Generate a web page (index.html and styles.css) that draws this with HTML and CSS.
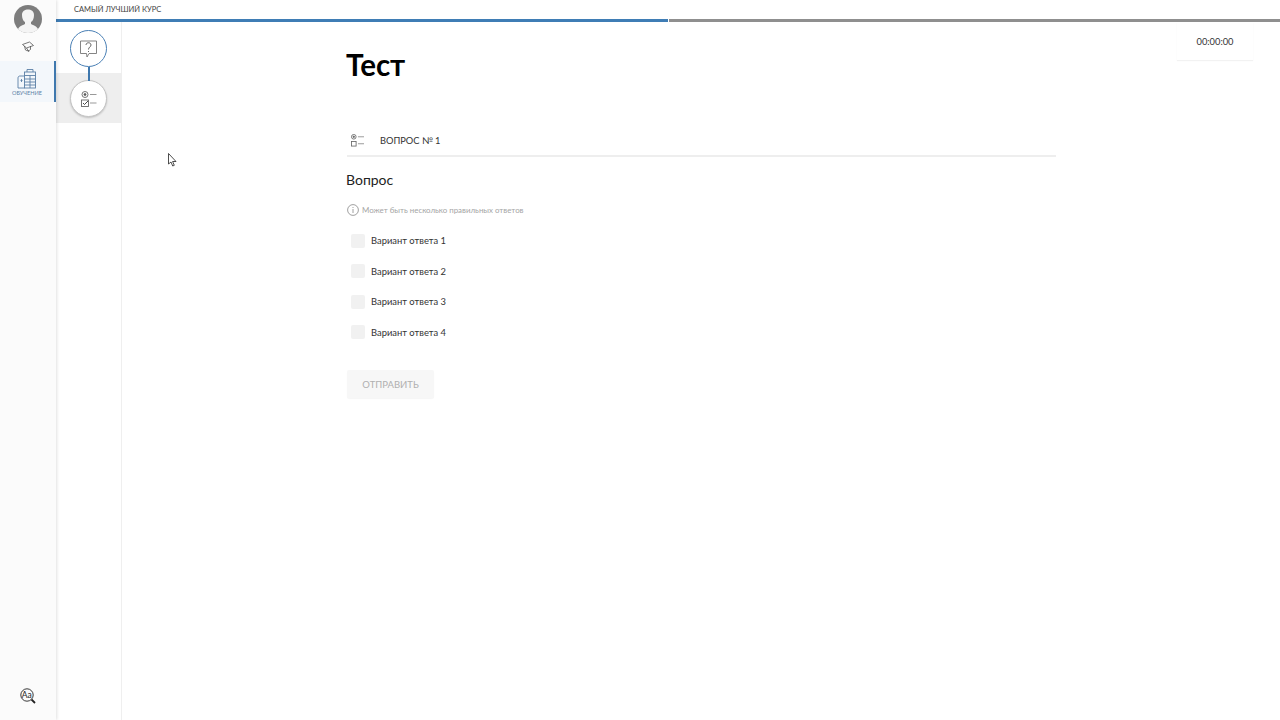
FILE: index.html
```html
<!DOCTYPE html>
<html lang="ru">
<head>
<meta charset="utf-8">
<title>Тест</title>
<link rel="stylesheet" href="styles.css">
</head>
<body>
<div class="app">
  <aside class="sidebar">
    <div class="avatar">
      <svg width="28" height="28" viewBox="0 0 28 28"><circle cx="14" cy="14" r="14" fill="#7d7d7d"/><path d="M4 24c2-4 6-4 7-5v-2c-2-1-3-4-3-7 0-4 3-5.500 6-5.500s6 1.500 6 5.500c0 3-1 6-3 7v2c1 1 5 1 7 5-2.500 2.500-6 4-10 4s-7.500-1.500-10-4z" fill="#f4f4f4"/></svg>
    </div>
    <div class="side-cap">
      <svg width="12" height="12" viewBox="0 0 12 12" fill="none" stroke="#555" stroke-width=".8"><path d="M.5 3.500 7.500 1l4 3.500-7 2.500z"/><path d="M2.500 5 3.500 9c1.500 1.200 3.500 1 5-.5L8.500 5"/><path d="M4.500 7 7 11"/></svg>
    </div>
    <div class="side-item">
      <svg width="20" height="20" viewBox="0 0 20 20" fill="none" stroke="#5b7fa6" stroke-width=".9"><rect x="7.500" y="3" width="11" height="16"/><path d="M10 3V.5h6V3M7.500 6.500h11M7.500 10h11M7.500 13h11M7.500 16h11M13 6.500V19"/><path d="M1 19V9c0-1.500 1-2 2-2h4.500"/><path d="M1 19h6.500M3.500 11.500h2M4.500 10v3"/></svg>
      <span class="side-label">ОБУЧЕНИЕ</span>
    </div>
    <div class="side-bottom">
      <svg width="16" height="16" viewBox="0 0 16 16" fill="none" stroke="#222" stroke-width=".9"><circle cx="7" cy="7" r="6.200"/><path d="m11.500 11.500 3.500 3.500" stroke-width="1.800"/><text x="1.800" y="10" font-family="Lato, sans-serif" font-size="8.500" fill="#222" stroke="none">Aa</text></svg>
    </div>
  </aside>
  <div class="workspace">
    <header class="topbar"><span class="course">САМЫЙ ЛУЧШИЙ КУРС</span></header>
    <div class="progress"><div class="progress-done"></div><div class="progress-rest"></div></div>
    <div class="columns">
      <nav class="steps">
        <div class="step-first">
          <div class="node">
            <svg width="17" height="18" viewBox="0 0 17 18" fill="none" stroke="#777" stroke-width=".9"><path d="M.5 1h16v12.500H9L7 17l-.5-3.500h-6z"/><path d="M6 5c0-3 5-3 5 0 0 2-2.500 2-2.500 4.500M8.500 11v1" stroke="#555"/></svg>
          </div>
          <div class="link"></div>
        </div>
        <div class="step-active">
          <div class="node node-active">
            <svg width="16" height="16" viewBox="0 0 16 16" fill="none" stroke="#666" stroke-width=".9"><circle cx="4" cy="3.500" r="3"/><circle cx="4" cy="3.500" r="1" fill="#444"/><rect x=".5" y="9" width="7" height="6.500"/><path d="m2 12 1.500 1.500L7 10" stroke="#333"/><path d="M9 3.500h6.500M9 12h6.500" stroke="#999" stroke-width="1.200"/></svg>
          </div>
        </div>
      </nav>
      <main class="content">
        <h1 class="title">Тест</h1>
        <div class="question-head">
          <svg class="head-icon" width="13" height="13" viewBox="0 0 14 14" fill="none" stroke="#666" stroke-width=".9"><circle cx="3" cy="3" r="2.500"/><circle cx="3" cy="3" r=".8" fill="#444"/><rect x=".5" y="8" width="5" height="5"/><path d="M7.500 3H14M7.500 10.500H14" stroke="#888"/></svg>
          <span>ВОПРОС № 1</span>
        </div>
        <h2 class="question">Вопрос</h2>
        <div class="hint">
          <svg width="12" height="12" viewBox="0 0 12 12" fill="none" stroke="#888" stroke-width=".8"><circle cx="6" cy="6" r="5.400"/><path d="M6 5v4M6 3v1"/></svg>
          <span>Может быть несколько правильных ответов</span>
        </div>
        <ul class="answers">
          <li class="answer"><span class="box"></span>Вариант ответа 1</li>
          <li class="answer"><span class="box"></span>Вариант ответа 2</li>
          <li class="answer"><span class="box"></span>Вариант ответа 3</li>
          <li class="answer"><span class="box"></span>Вариант ответа 4</li>
        </ul>
        <button class="submit" type="button">ОТПРАВИТЬ</button>
      </main>
      <aside class="timer-col"><div class="timer">00:00:00</div></aside>
    </div>
  </div>
</div>
<svg class="cursor" width="9" height="14" viewBox="0 0 9 14"><path d="M.5.500v10.500l2.500-2 1.700 4 1.600-.7-1.700-3.800H8z" fill="#fff" stroke="#222" stroke-width=".8"/></svg>
</body>
</html>
```
FILE: styles.css
```css
* { box-sizing: border-box; }
html, body { margin: 0; height: 100%; background: #fff; overflow: hidden; }
body { font-family: Lato, "Open Sans", sans-serif; color: #222; }
.app { display: flex; height: 720px; }
.sidebar {
  width: 56px; flex: none; background: #fbfbfb; display: flex; flex-direction: column;
  align-items: stretch; box-shadow: 1px 0 3px rgba(0,0,0,.12); position: relative; z-index: 1;
}
.avatar { display: flex; justify-content: center; padding-top: 5px; height: 33px; }
.side-cap { display: flex; justify-content: center; padding-top: 8px; height: 28px; }
.side-item {
  height: 41px; background: #f3f7fb; border-right: 2px solid #3f78ae; display: flex;
  flex-direction: column; align-items: center; padding-top: 8px;
}
.side-label { font-size: 5.600px; line-height: 7px; color: #5b7fa6; }
.side-bottom { margin-top: auto; display: flex; justify-content: center; padding-bottom: 16px; }
.workspace { flex: 1; display: flex; flex-direction: column; min-width: 0; }
.topbar { height: 19px; padding: 0 0 1px 18px; display: flex; align-items: center; }
.course { font-size: 7.500px; color: #444; }
.progress { display: flex; height: 3px; }
.progress-done { width: 612px; background: #3f7db5; }
.progress-rest { flex: 1; background: #8f8f8f; margin-left: 1px; }
.columns { flex: 1; display: flex; min-height: 0; }
.steps { width: 66px; flex: none; border-right: 1px solid #efefef; padding-top: 8px; }
.step-first { display: flex; flex-direction: column; align-items: center; height: 43px; margin-right: 1px; padding-left: 1px; }
.step-active { background: #eeeeee; height: 50px; margin-right: -1px; padding: 7px 0 0 14px; display: flex; }
.node {
  width: 37px; height: 37px; border-radius: 50%; background: #fff; border: 1px solid #4a80b5;
  display: flex; align-items: center; justify-content: center; flex: none;
}
.node-active { border-color: #c4c4c4; box-shadow: 0 1px 2px rgba(0,0,0,.2); position: relative; }
.link { width: 2px; height: 14px; background: #3f78ae; flex: none; position: relative; z-index: 1; }
.content { width: 710px; margin-left: 224px; flex: none; }
.title { margin: 23px 0 0; font-size: 29.500px; line-height: 40px; font-weight: 700; color: #000; }
.question-head {
  margin-top: 46px; height: 26px; display: flex; align-items: flex-start; gap: 16px; padding: 3px 0 0 4px;
  border-bottom: 2px solid #eeeeee; font-size: 9.300px; line-height: 14px; color: #333; margin-left: 1px;
}
.head-icon { margin-top: 0; }
.question { margin: 12px 0 0; font-size: 14px; line-height: 22px; font-weight: 400; color: #222; }
.hint { margin-top: 12px; display: flex; align-items: center; gap: 3px; height: 14px; font-size: 7.900px; color: #a5a5a5; margin-left: 1px; }
.answers { list-style: none; margin: 8.400px 0 0; padding: 0; }
.answer { height: 30.600px; display: flex; align-items: center; font-size: 9.400px; color: #333; padding-left: 5px; }
.box { width: 14px; height: 14px; background: #f1f1f1; border-radius: 2px; margin-right: 6px; flex: none; }
.submit {
  margin: 22.600px 0 0 1px; width: 87px; height: 28px; border: 0; border-radius: 2px; background: #f7f7f7;
  color: #b0b0b0; font: 400 9.500px Lato, "Open Sans", sans-serif; padding: 0;
  box-shadow: 0 1px 1px rgba(0,0,0,.04);
}
.timer-col { flex: 1; display: flex; justify-content: flex-end; }
.timer {
  width: 76px; height: 38px; margin-right: 27px; text-align: center; font-size: 9.300px; line-height: 39px; color: #333;
  box-shadow: 0 1px 1px rgba(0,0,0,.05);
}
.cursor { position: absolute; left: 168px; top: 153px; }
```
